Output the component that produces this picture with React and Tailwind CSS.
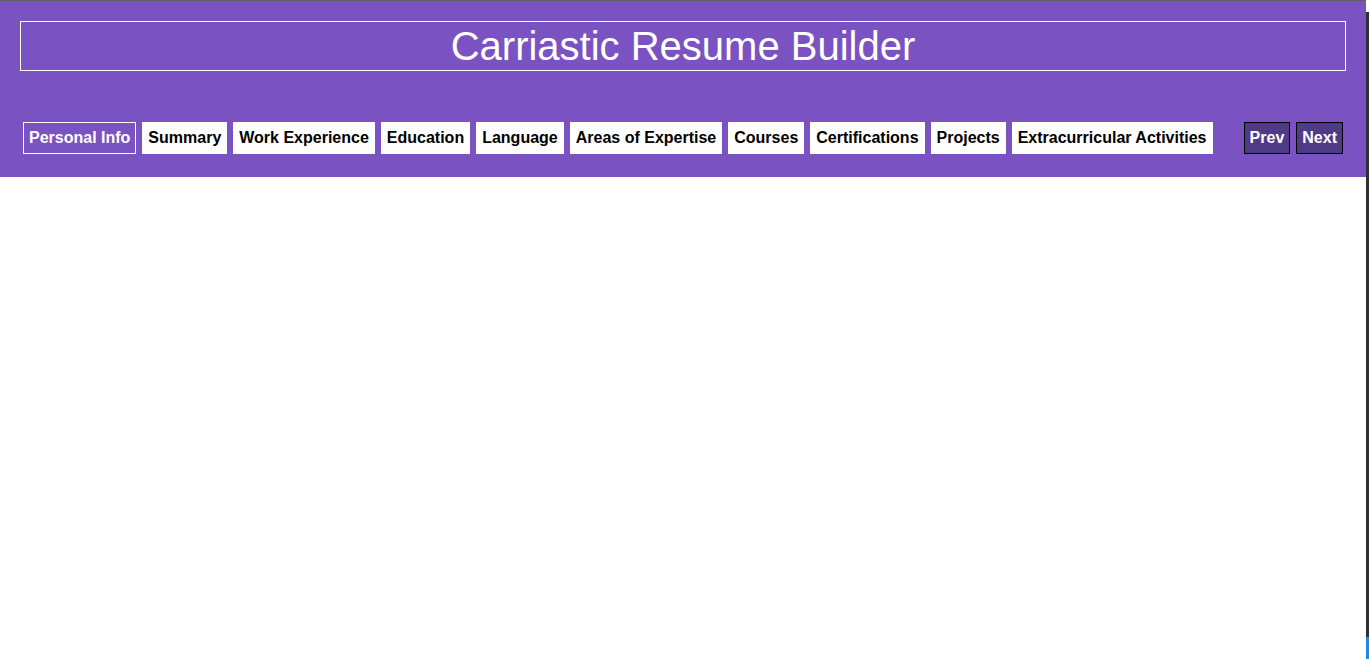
import React, { useState } from 'react';

const sections = [
  'Personal Info',
  'Summary',
  'Work Experience',
  'Education',
  'Language',
  'Areas of Expertise',
  'Courses',
  'Certifications',
  'Projects',
  'Extracurricular Activities',
];

export default function App() {
  const [active, setActive] = useState(0);

  return (
    <div className="flex min-h-screen bg-white font-['Liberation_Sans',Arial,sans-serif]">
      <div className="flex-1">
        <header className="border-t border-[#5f5f5f] bg-[#7b52c1] px-5 pt-5 pb-5">
          <div className="border border-white py-[3px] text-center">
            <h1 className="text-[40px] leading-[42px] text-white">Carriastic Resume Builder</h1>
          </div>

          <nav className="mt-[48px] flex items-center justify-between">
            <div className="flex flex-wrap">
              {sections.map((s, i) => (
                <button
                  key={s}
                  onClick={() => setActive(i)}
                  className={`m-[3px] border px-[5px] py-[6px] text-[16px] leading-[18px] font-bold ${
                    i === active ? 'border-white bg-transparent text-white' : 'border-white bg-white text-black'
                  }`}
                >
                  {s}
                </button>
              ))}
            </div>
            <div className="flex">
              <button
                onClick={() => setActive(Math.max(0, active - 1))}
                className="m-[3px] border border-black bg-[#4f3a86] px-[5px] py-[6px] text-[16px] leading-[18px] font-bold text-white"
              >
                Prev
              </button>
              <button
                onClick={() => setActive(Math.min(sections.length - 1, active + 1))}
                className="m-[3px] border border-black bg-[#4f3a86] px-[5px] py-[6px] text-[16px] leading-[18px] font-bold text-white"
              >
                Next
              </button>
            </div>
          </nav>
        </header>
      </div>
      {/* scrollbar strip */}
      <div className="flex w-[3px] flex-col bg-[#2f2f2f]">
        <div className="h-[12px] bg-white" />
        <div className="flex-1" />
        <div className="h-[22px] bg-[#1e88e5]" />
      </div>
    </div>
  );
}
